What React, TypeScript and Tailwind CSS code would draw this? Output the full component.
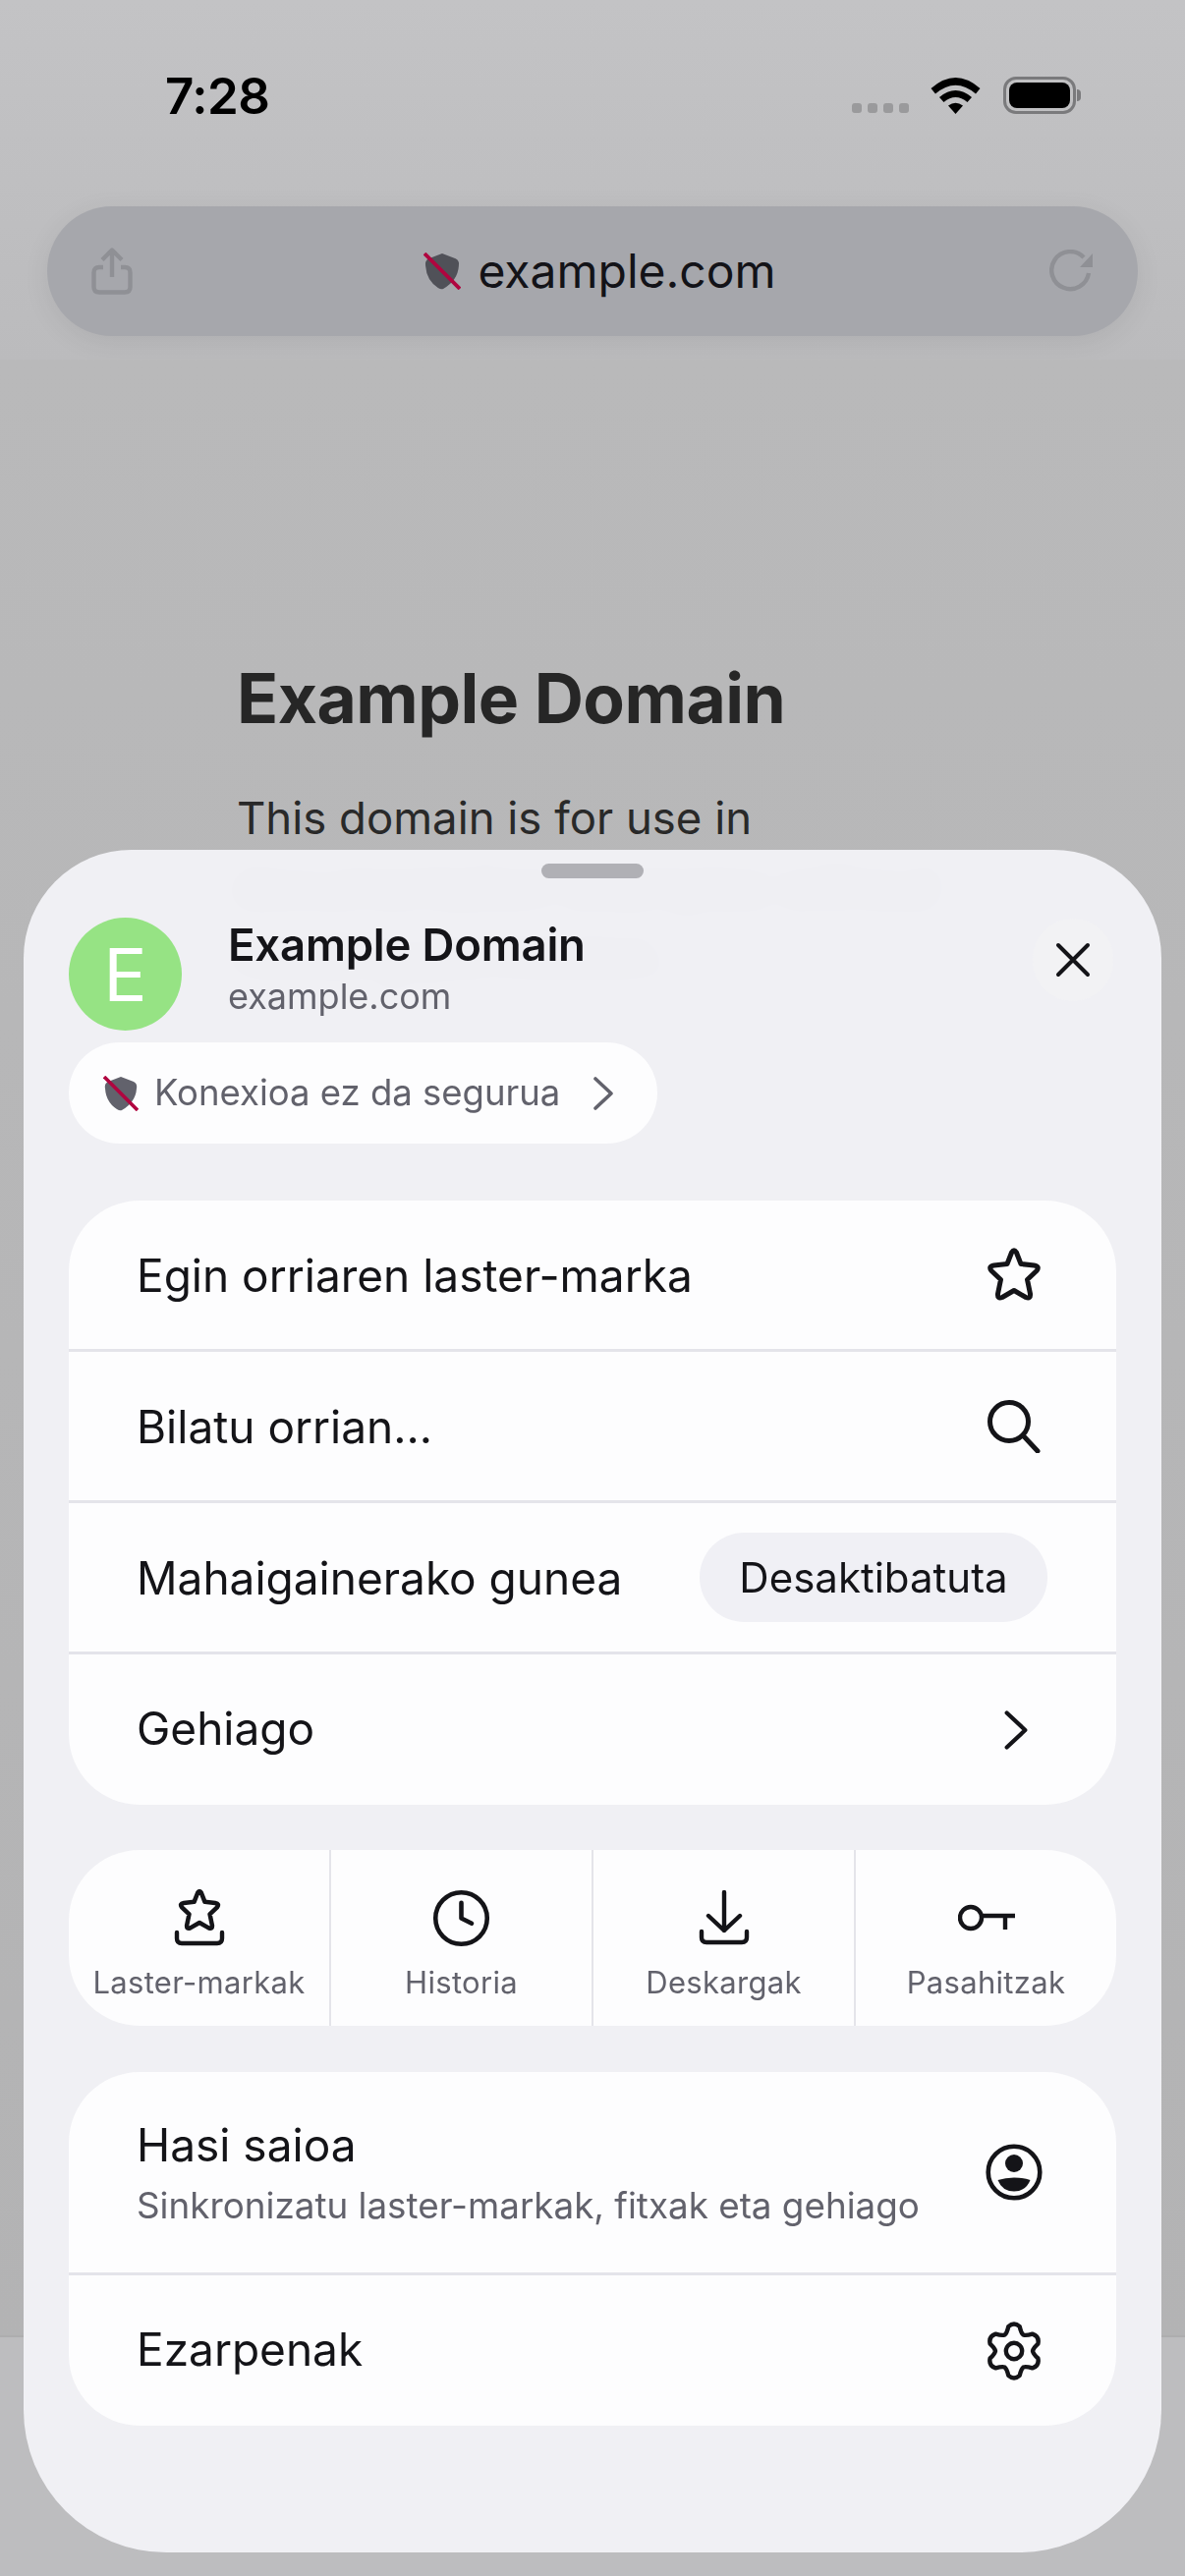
import React from "react";
import { Clock } from "lucide-react";

const STAR = "M26.7 4.5 Q29 1 31.3 4.5 L36 16.5 L49.5 18 Q55.5 19 52 23.5 L42.5 32.5 L45.5 47 Q46 52.5 41 50.5 L29 43.5 L17 50.5 Q12 52.5 12.5 47 L15.5 32.5 L6 23.5 Q2.5 19 8.5 18 L22 16.5 Z";

const gearPath = () => {
  const p = (deg: number, r: number) => {
    const a = (deg * Math.PI) / 180;
    return `${(30 + r * Math.cos(a)).toFixed(2)} ${(30 + r * Math.sin(a)).toFixed(2)}`;
  };
  let d = `M${p(-120, 19)}`;
  for (let i = 0; i < 6; i++) {
    const a = -90 + i * 60;
    d += ` Q${p(a - 22, 19.5)} ${p(a - 13, 25.5)} Q${p(a, 30)} ${p(a + 13, 25.5)} Q${p(a + 22, 19.5)} ${p(a + 30, 19)}`;
  }
  return d + " Z";
};

const Shield = ({ className, fill }: { className: string; fill: string }) => (
  <svg viewBox="0 0 36 36" className={className}>
    <path d="M18 1 L31 6 Q35 8 34 13 Q33 27 19 35 Q17 36 14 34 Q3 27 2 13 Q1 8 5 6 Z" fill={fill} />
    <path d="M1 1 L35 35" stroke="#b0053f" strokeWidth="3.6" fill="none" />
  </svg>
);

const Chevron = ({ className, color, w }: { className: string; color: string; w: number }) => (
  <svg viewBox="0 0 24 36" className={className} fill="none" stroke={color} strokeWidth={w} strokeLinecap="round" strokeLinejoin="round">
    <path d="M4 3 L20 18 L4 33" />
  </svg>
);

const Row = ({ label, children, border = true }: { label: string; children: React.ReactNode; border?: boolean }) => (
  <div className={`flex items-center justify-between pl-[69px] ${border ? "h-[154px] border-b-[3px] border-[#e4e4ea]" : "h-[153px]"}`}>
    <span className={`text-[46px] leading-none text-[#141418] ${border ? "" : "pb-[3px]"}`}>{label}</span>
    {children}
  </div>
);

const Tile = ({ label, children, border = true }: { label: string; children: React.ReactNode; border?: boolean }) => (
  <div className={`flex flex-1 flex-col items-center pt-[39px] ${border ? "border-r-2 border-[#e4e4ea]" : ""}`}>
    <div className="flex h-[60px] items-center justify-center">{children}</div>
    <span className="mt-[16px] text-[31px] leading-[40px] tracking-[0.3px] text-[#62626c]">{label}</span>
  </div>
);

export default function App() {
  return (
    <div className="relative h-[2622px] w-[1206px] overflow-hidden bg-[#b7b7b8] font-['Inter',sans-serif]">
      <div className="h-[366px] bg-gradient-to-b from-[#c3c3c5] to-[#bbbbbd] px-[48px] pt-[70px]">
        <div className="flex h-[54px] items-center justify-between pl-[120px]">
          <span className="text-[51px] font-semibold leading-none tracking-[-0.5px] text-black">7:28</span>
          <div className="mr-[58px] flex items-center">
            <div className="mt-[26px] flex gap-[6px]">
              <div className="h-[10px] w-[10px] rounded-[3px] bg-[#9a9a9c]" />
              <div className="h-[10px] w-[10px] rounded-[3px] bg-[#9a9a9c]" />
              <div className="h-[10px] w-[10px] rounded-[3px] bg-[#9a9a9c]" />
              <div className="h-[10px] w-[10px] rounded-[3px] bg-[#9a9a9c]" />
            </div>
            <svg viewBox="0 0 51 38" className="ml-[22px] h-[38px] w-[51px]">
              <path d="M0.5 12 Q25.5 -10 50.5 12 L46 17.5 Q25.5 0 5 17.5 Z" fill="#000" />
              <path d="M9 21 Q25.5 7 42 21 L37.5 26 Q25.5 16 13.5 26 Z" fill="#000" />
              <path d="M18 29.5 Q25.5 24 33 29.5 L25.5 38 Z" fill="#000" />
            </svg>
            <div className="ml-[23px] flex items-center">
              <div className="h-[38px] w-[74px] rounded-[13px] border-[3px] border-[#7a7a7c] p-[3px]">
                <div className="h-full w-full rounded-[8px] bg-black" />
              </div>
              <div className="ml-[1px] h-[12px] w-[4px] rounded-r-full bg-[#7a7a7c]" />
            </div>
          </div>
        </div>
        <div className="mt-[86px] flex h-[132px] items-center justify-between rounded-[66px] bg-[#a6a7ac] pl-[45px] pr-[44px] shadow-[0_6px_28px_rgba(0,0,0,0.07)]">
          <svg viewBox="0 0 42 48" className="h-[48px] w-[42px]" fill="none" stroke="#8f9095" strokeWidth="4.4" strokeLinejoin="round">
            <path d="M21 30 V4 M11 12.5 L21 2.5 L31 12.5" />
            <path d="M12 20 H8 Q2.5 20 2.5 25.5 V40 Q2.5 45.5 8 45.5 H34 Q39.5 45.5 39.5 40 V25.5 Q39.5 20 34 20 H30" />
          </svg>
          <div className="ml-[18px] flex items-center">
            <Shield className="h-[38px] w-[38px]" fill="#505158" />
            <span className="ml-[17px] text-[48px] leading-none text-[#131318]">example.com</span>
          </div>
          <svg viewBox="0 0 46 44" className="h-[44px] w-[46px]" fill="none">
            <path d="M40 24 A19 19 0 1 1 35 8" stroke="#8f9095" strokeWidth="4.4" />
            <path d="M31 18 H44 V4 Z" fill="#8f9095" />
          </svg>
        </div>
      </div>
      <div className="h-[2011px] bg-gradient-to-b from-[#b9b9ba] to-[#b3b3b4] pl-[241px] pr-[200px] pt-[304px]">
        <h1 className="text-[69.5px] font-bold leading-[82px] tracking-[-0.5px] text-[#262626]">Example Domain</h1>
        <p className="mt-[46px] text-[45.5px] leading-[70px] text-[#292929]">
          This domain is for use in documentation examples without needing permission.
        </p>
      </div>
      <div className="h-[245px] border-t-2 border-[#adadae] bg-[#bdbdbf]" />

      <div className="absolute left-[24px] top-[865px] h-[1733px] w-[1158px] rounded-t-[110px] rounded-b-[145px] bg-[#f1f1f5]/[0.98] px-[46px] pt-[14px] backdrop-blur-[12px]">
        <div className="mx-auto h-[15px] w-[104px] rounded-full bg-[#b0b0b5]" />
        <div className="mt-[40px] flex h-[115px] items-start">
          <div className="flex h-[115px] w-[115px] shrink-0 items-center justify-center rounded-full bg-[#96e384] text-[74px] font-normal leading-none text-white">E</div>
          <div className="ml-[47px] flex-1 pt-[1px]">
            <div className="text-[45.5px] font-semibold leading-[54px] tracking-[-0.2px] text-[#141418]">Example Domain</div>
            <div className="mt-[2px] text-[36px] leading-[46px] text-[#62626c]">example.com</div>
          </div>
          <div className="mr-[3px] mt-[1px] flex h-[84px] w-[82px] items-center justify-center rounded-full bg-[#f2f2f4]">
            <svg viewBox="0 0 36 36" className="h-[36px] w-[36px]" fill="none" stroke="#141418" strokeWidth="4" strokeLinecap="round">
              <path d="M3 3 L33 33 M33 3 L3 33" />
            </svg>
          </div>
        </div>
        <div className="mt-[12px] flex h-[103px] w-[599px] items-center rounded-[52px] bg-[#fdfdfe] pl-[35px]">
          <Shield className="h-[36px] w-[36px]" fill="#62626c" />
          <span className="ml-[16px] text-[36.5px] leading-none text-[#62626c]">Konexioa ez da segurua</span>
          <Chevron className="ml-[32px] h-[36px] w-[24px]" color="#62626c" w={3.6} />
        </div>

        <div className="mt-[58px] overflow-hidden rounded-[72px] bg-[#fdfdfe]">
          <Row label="Egin orriaren laster-marka">
            <svg viewBox="0 0 58 56" className="mr-[75px] h-[56px] w-[58px]" fill="none" stroke="#141418" strokeWidth="5" strokeLinejoin="round">
              <path d={STAR} />
            </svg>
          </Row>
          <Row label="Bilatu orrian...">
            <svg viewBox="0 0 54 54" className="mr-[77px] h-[54px] w-[54px]" fill="none" stroke="#141418" strokeWidth="5" strokeLinecap="round">
              <circle cx="22" cy="22" r="19.5" />
              <path d="M36 36 L51 52" />
            </svg>
          </Row>
          <Row label="Mahaigainerako gunea">
            <div className="mr-[70px] flex h-[91px] w-[354px] items-center justify-center rounded-[46px] bg-[#f0f0f5] text-[42px] leading-none text-[#141418]">Desaktibatuta</div>
          </Row>
          <Row label="Gehiago" border={false}>
            <Chevron className="mr-[88px] h-[42px] w-[28px]" color="#141418" w={3.6} />
          </Row>
        </div>

        <div className="mt-[46px] flex h-[179px] overflow-hidden rounded-[72px] bg-[#fdfdfe]">
          <Tile label="Laster-markak">
            <svg viewBox="0 0 52 58" className="h-[58px] w-[52px]" fill="none" stroke="#141418" strokeWidth="4.4" strokeLinecap="round" strokeLinejoin="round">
              <g transform="translate(3.4 0) scale(0.78)" strokeWidth="5.8">
                <path d={STAR} />
              </g>
              <path d="M3 44 V50 Q3 55 8 55 H44 Q49 55 49 50 V44" />
            </svg>
          </Tile>
          <Tile label="Historia">
            <Clock className="h-[63px] w-[63px] text-[#141418]" strokeWidth={1.75} />
          </Tile>
          <Tile label="Deskargak">
            <svg viewBox="0 0 52 56" className="h-[56px] w-[52px]" fill="none" stroke="#141418" strokeWidth="4.4" strokeLinecap="round" strokeLinejoin="round">
              <path d="M26 2 V41 M10 26 L26 41 L42 26" />
              <path d="M3 42 V48 Q3 53 8 53 H44 Q49 53 49 48 V42" />
            </svg>
          </Tile>
          <Tile label="Pasahitzak" border={false}>
            <svg viewBox="0 0 58 30" className="h-[30px] w-[58px]" fill="none" stroke="#141418" strokeWidth="4.4">
              <circle cx="13" cy="15" r="11" />
              <path d="M24 13 H58 M48 13 V27" />
            </svg>
          </Tile>
        </div>

        <div className="mt-[47px] overflow-hidden rounded-[72px] bg-[#fdfdfe]">
          <div className="flex h-[207px] items-center justify-between border-b-[3px] border-[#e4e4ea] pl-[69px]">
            <div>
              <div className="text-[46px] leading-[56px] text-[#141418]">Hasi saioa</div>
              <div className="mt-[12px] text-[36.8px] leading-[44px] text-[#62626c]">Sinkronizatu laster-markak, fitxak eta gehiago</div>
            </div>
            <svg viewBox="0 0 58 58" className="mr-[75px] h-[58px] w-[58px]">
              <circle cx="29" cy="29" r="26.3" fill="none" stroke="#141418" strokeWidth="4.6" />
              <circle cx="29" cy="20" r="9" fill="#141418" />
              <path d="M12.5 37 Q20 34.5 29 34.5 Q38 34.5 45.5 37 Q41 48.5 29 48.5 Q17 48.5 12.5 37 Z" fill="#141418" />
            </svg>
          </div>
          <Row label="Ezarpenak" border={false}>
            <svg viewBox="0 0 60 60" className="mr-[74px] h-[60px] w-[60px]" fill="none" stroke="#141418" strokeWidth="4.4" strokeLinejoin="round">
              <path d={gearPath()} />
              <circle cx="30" cy="30" r="8.2" />
            </svg>
          </Row>
        </div>
      </div>
    </div>
  );
}
